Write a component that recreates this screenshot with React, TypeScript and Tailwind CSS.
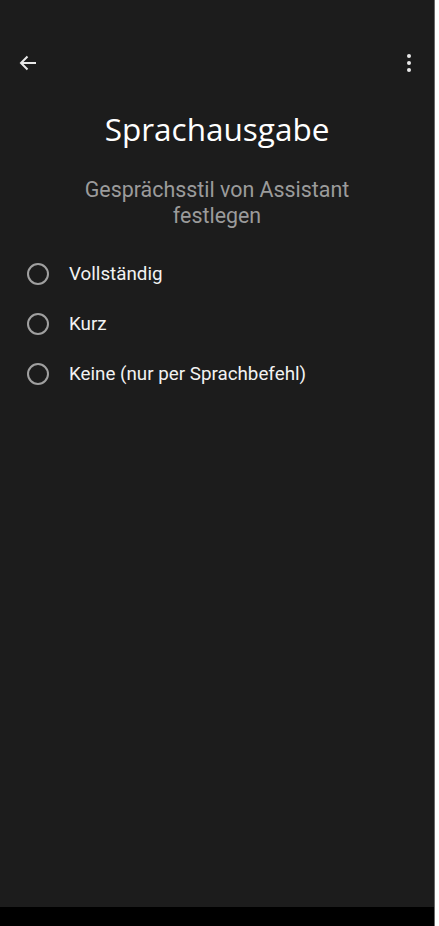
import React from "react";

const options = ["Vollständig", "Kurz", "Keine (nur per Sprachbefehl)"];

export default function App() {
  return (
    <div className="w-[439px] h-[926px] bg-white flex">
      <div className="w-[435px] h-[926px] bg-[#1c1c1c] border-r border-[#6a6a6a] flex flex-col" style={{ fontFamily: "Roboto, 'Open Sans', sans-serif" }}>
        <div className="h-[35px]" />
        <div className="h-[56px] flex items-center justify-between pl-4 pr-[13px]">
          <svg width="24" height="24" viewBox="0 0 24 24" fill="none">
            <path d="M20 12H5M11.5 5.5L5 12l6.5 6.5" stroke="#e8e8e8" strokeWidth="2" />
          </svg>
          <svg width="24" height="24" viewBox="0 0 24 24" fill="#e8e8e8">
            <circle cx="12" cy="5" r="2" />
            <circle cx="12" cy="12" r="2" />
            <circle cx="12" cy="19" r="2" />
          </svg>
        </div>
        <div className="text-center text-white text-[31.5px] leading-[40px] mt-[18px]" style={{ fontFamily: "'Open Sans', sans-serif" }}>
          Sprachausgabe
        </div>
        <div className="text-center text-[#9b9b9b] text-[21.4px] leading-[26px] mt-[28px] px-[70px]">
          Gesprächsstil von Assistant festlegen
        </div>
        <div className="flex flex-col mt-[20px]">
          {options.map((o) => (
            <div key={o} className="h-[50px] flex items-center pl-[27px]">
              <div className="w-[22px] h-[22px] rounded-full border-2 border-[#a0a0a0]" />
              <span className="ml-[20px] text-[18.8px] text-[#f2f2f2]">{o}</span>
            </div>
          ))}
        </div>
        <div className="flex-1" />
        <div className="h-[19px] bg-black" />
      </div>
    </div>
  );
}
